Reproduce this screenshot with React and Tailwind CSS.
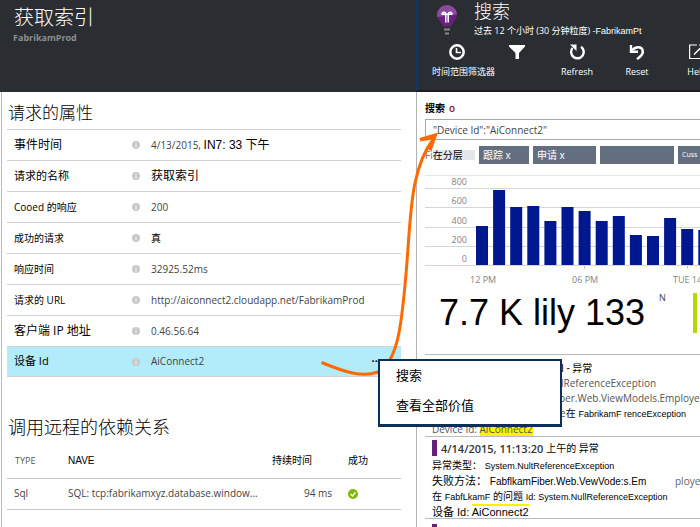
import React from "react";

const cjk = "font-['Open_Sans','Noto_Sans_CJK_SC',sans-serif]";
const arial = "font-['Liberation_Sans','Noto_Sans_CJK_SC',sans-serif]";

const properties = [
  { label: "事件时间", size: "text-[12px]", value: <>4/13/2015, <span className="text-[12px] text-black font-['Liberation_Sans','Noto_Sans_CJK_SC',sans-serif]">IN7: 33 下午</span></> },
  { label: "请求的名称", size: "text-[11px]", value: <span className="text-[12px] text-black">获取索引</span> },
  { label: "Cooed 的响应", size: "text-[10px]", value: "200" },
  { label: "成功的请求", size: "text-[10px]", value: <span className="text-black">真</span> },
  { label: "响应时间", size: "text-[10px]", value: "32925.52ms" },
  { label: "请求的 URL", size: "text-[10px]", value: "http://aiconnect2.cloudapp.net/FabrikamProd" },
  { label: "客户端 IP 地址", size: "text-[12px]", value: "0.46.56.64" },
  { label: "设备 Id", size: "text-[11px]", value: "AiConnect2", active: true },
];

const bars = [39, 75, 58, 59, 44, 58, 54, 44, 49, 30, 29, 47, 36, 35];
const gridLines = [
  { label: "800", y: 13 },
  { label: "600", y: 32 },
  { label: "400", y: 52 },
  { label: "200", y: 71 },
  { label: "0", y: 90 },
];

function InfoIcon() {
  return (
    <svg viewBox="0 0 8 8" className="size-2 shrink-0" aria-hidden="true">
      <circle cx="4" cy="4" r="4" fill="#c8c8c8" />
      <path d="M4 1.6v1M4 3.5v3" stroke="#f4f4f4" strokeWidth="1.1" />
    </svg>
  );
}

function BulbIcon() {
  return (
    <svg viewBox="0 0 20 31" className="mt-[3px] h-[31px] w-5 shrink-0" aria-hidden="true">
      <path d="M10 0a10 10 0 0 1 10 9.500c0 4.500-3.500 6-6 12H6C3.500 15.500 0 14 0 9.500A10 10 0 0 1 10 0z" fill="#68217a" />
      <path d="M10 0a10 10 0 0 1 10 9.500L0 12V9.500A10 10 0 0 1 10 0z" fill="#8a4b9c" />
      <path d="M5 9.800c0-3.400 3.800-3.400 3.800 0V17.500M15 9.800c0-3.400-3.800-3.400-3.800 0V17.500M5 9.300h10" fill="none" stroke="#fff" strokeWidth="1.500" />
      <path d="M7 24.500h6M8 28.500h4" stroke="#8a8a8a" strokeWidth="2" />
    </svg>
  );
}

function ToolButton({ label, children }) {
  return (
    <button type="button" className="flex w-[60px] shrink-0 flex-col items-center gap-[5px] text-[9px] leading-[14px] text-white">
      {children}
      <span>{label}</span>
    </button>
  );
}

function LeftPane() {
  return (
    <section className="flex w-[416px] shrink-0 flex-col">
      <header className="h-[92px] bg-[#2a2e32] pl-[13px] pt-[5px]">
        <h1 className="pl-px text-[20px] font-light leading-[26px] text-white">获取索引</h1>
        <p className="text-[9px] font-bold leading-[14px] text-[#8b8e91]">FabrikamProd</p>
      </header>
      <div className="ml-px flex-1 border-l border-[#b9bbbd] pl-[5px] pr-[15px]">
        <h2 className="flex h-[37px] items-center pl-px pt-1 text-[17px] font-light text-black">请求的属性</h2>
        <dl>
          {properties.map((p) => (
            <div
              key={p.label}
              className={`flex h-[31px] items-center border-t border-[#d2d2d2] pl-[7px] ${p.active ? "border-b bg-[#b2ebfa]" : ""}`}
            >
              <dt className={`w-[118px] shrink-0 text-black ${p.size}`}>{p.label}</dt>
              <InfoIcon />
              <dd className="ml-[11px] flex-1 whitespace-nowrap text-[10px] text-[#444]">{p.value}</dd>
              {p.active && (
                <button type="button" aria-label="更多" className="mr-5 text-[11px] font-bold text-black">···</button>
              )}
            </div>
          ))}
        </dl>
        <h2 className="mt-[37px] flex h-[26px] items-center pl-px text-[18px] font-light text-black">调用远程的依赖关系</h2>
        <table className="mt-1 w-full table-fixed text-left text-[10px] text-[#444]">
          <thead>
            <tr className="h-[34px] border-b border-[#c8c8c8]">
              <th className="w-[61px] pl-2 text-[9px] font-normal text-[#555]">TYPE</th>
              <th className={`text-[10px] font-normal text-black ${arial}`}>NAVE</th>
              <th className="w-[84px] pl-2 text-[10px] font-normal text-black">持续时间</th>
              <th className="w-[53px] text-[10px] font-normal text-black">成功</th>
            </tr>
          </thead>
          <tbody>
            <tr className="h-[31px] border-b border-[#c8c8c8]">
              <td className="pl-[7px]">Sql</td>
              <td className="whitespace-nowrap">SQL: tcp:fabrikamxyz.database.window...</td>
              <td className="pr-4 text-right">94 ms</td>
              <td>
                <svg viewBox="0 0 10 10" className="size-[10px]" role="img" aria-label="成功">
                  <circle cx="5" cy="5" r="5" fill="#7fba00" />
                  <path d="M2.600 5.100l1.800 1.800 3-3.400" fill="none" stroke="#fff" strokeWidth="1.400" />
                </svg>
              </td>
            </tr>
          </tbody>
        </table>
      </div>
    </section>
  );
}

function SearchHeader() {
  return (
    <header className="h-[92px] overflow-hidden border-b-2 border-l border-b-[#1b1d1f] border-l-[#0a3a6b] bg-[#2a2e32] text-white">
      <div className="flex h-[42px] gap-[17px] pl-5 pt-[2px]">
        <BulbIcon />
        <div className="whitespace-nowrap">
          <h1 className="text-[18px] font-light leading-[18px]">搜索</h1>
          <p className="pt-1 text-[9px] leading-[14px]">
            过去 12 个小时 (30 分钟粒度) <span className={arial}>-FabrikamPt</span>
          </p>
        </div>
      </div>
      <nav className="flex pl-[10px] pt-[2px]">
        <button type="button" className="flex w-[60px] shrink-0 flex-col items-start gap-[5px] whitespace-nowrap pl-[5px] text-[9px] leading-[14px]">
          <svg viewBox="0 0 16 16" className="ml-[17px] size-4" aria-hidden="true">
            <circle cx="8" cy="8" r="6.700" fill="none" stroke="#fff" strokeWidth="2.500" />
            <path d="M7.500 4v4.500H12" fill="none" stroke="#fff" strokeWidth="1.600" />
          </svg>
          <span>时间范围筛选器</span>
        </button>
        <ToolButton label="">
          <svg viewBox="0 0 16 16" className="size-4" aria-label="筛选器" role="img">
            <path d="M0 1h16v1.500L10 9v6H6.500V9L0 2.500z" fill="#fff" />
          </svg>
        </ToolButton>
        <ToolButton label="Refresh">
          <svg viewBox="0 0 16 16" className="size-4" aria-hidden="true">
            <path d="M12 2.800A6.300 6.300 0 1 1 3.500 4" fill="none" stroke="#fff" strokeWidth="2.400" />
            <path d="M1 .5h6.500V7z" fill="#fff" />
          </svg>
        </ToolButton>
        <ToolButton label="Reset">
          <svg viewBox="0 0 16 16" className="size-4" aria-hidden="true">
            <path d="M3 6.200c2-2 4-3 6-3 3 0 4.800 2 4.800 4.700 0 3-3 5-5.800 7.300" fill="none" stroke="#fff" strokeWidth="2.500" />
            <path d="M2 1v6.700h7" fill="none" stroke="#fff" strokeWidth="2.400" />
          </svg>
        </ToolButton>
        <ToolButton label="Help">
          <svg viewBox="0 0 16 16" className="size-4" aria-hidden="true">
            <path d="M8 1H.6v13.500h14V8M10 1h4.500V6" fill="none" stroke="#fff" strokeWidth="1.200" />
            <path d="M5 10.500l9-9" fill="none" stroke="#fff" strokeWidth="1.500" />
          </svg>
        </ToolButton>
      </nav>
    </header>
  );
}

function Chart() {
  return (
    <svg width="300" height="116" viewBox="0 0 300 116" className="block" role="img" aria-label="事件数">
      <path d="M0 .5h300" stroke="#e6e6e6" />
      {gridLines.map((g) => (
        <g key={g.label}>
          <path d={`M0 ${g.y + 0.5}h300`} stroke="#d4d6d8" />
          <text x="42" y={g.y - 3} textAnchor="end" fontSize="9" fill="#808488">{g.label}</text>
        </g>
      ))}
      {bars.map((h, i) => (
        <rect key={i} x={51 + i * 17.1} y={90 - h} width="12" height={h} fill="#00188f" />
      ))}
      <path d="M159.500 91v3M262.500 91v3" stroke="#c4c6c8" />
      <g fontSize="9" fill="#808488">
        <text x="45" y="108">12 PM</text>
        <text x="147" y="108">06 PM</text>
        <text x="248" y="108">TUE 14</text>
      </g>
    </svg>
  );
}

const chip = "flex h-[18px] shrink-0 items-center bg-[#636f7f] px-1 text-[10px] text-white";

function RightPane() {
  return (
    <section className="flex min-w-0 flex-1 flex-col overflow-hidden">
      <SearchHeader />
      <div className="flex-1 overflow-hidden whitespace-nowrap border-l border-[#b0b3b6] pl-2">
        <label htmlFor="query" className="flex h-[27px] items-center gap-1 pt-[5px] text-[10px] font-semibold text-black">
          搜索 <span className="text-[#8b1a1a]">o</span>
        </label>
        <input
          id="query"
          defaultValue={'"Device Id":"AiConnect2"'}
          className="block h-[21px] w-[300px] border border-[#a6a9ac] bg-white px-[7px] text-[10px] text-[#444]"
        />
        <div className="mt-[6px] flex h-[18px] items-center">
          <div className="flex w-[54px] shrink-0 items-center text-[10px] text-[#777]">
            Fi<span className="bg-[#e3e7ea] pr-3 leading-[10px] text-black">在分层</span>
          </div>
          <div className="flex gap-1">
            <button type="button" className={`${chip} w-[50px]`}>跟踪 x</button>
            <button type="button" className={`${chip} w-[63px]`}>申请 x</button>
            <button type="button" aria-label="筛选" className={`${chip} w-[74px]`} />
            <button type="button" className={`${chip} w-[50px]`}><span className="text-[7px]">Cuss</span></button>
          </div>
        </div>
        <div className="mt-[11px]"><Chart /></div>
        <div className="flex h-[63px] items-start pl-[14px] pt-[2px]">
          <span className={`w-[220px] shrink-0 text-[36px] leading-[40px] text-black ${arial}`}>7.7 K lily 133</span>
          <span className="w-[34px] shrink-0 text-[9px] leading-[10px] text-[#444]">N</span>
          <span className="h-10 w-1 shrink-0 bg-[#b4d800]" />
        </div>
        <article className="h-[82px] border-t border-[#b8bbbe] pt-[6px] text-[10px] leading-[15px] text-[#555]">
          <h3 className="pl-[136px] font-semibold text-[#222]">l - <span className="font-normal text-black">异常</span></h3>
          <p className="pl-[136px]">lReferenceException</p>
          <p className="pl-[134px]">ber.Web.ViewModels.Employe</p>
          <p className="pl-[135px]">e<span className={`text-black ${arial}`}>在 <span className="text-[9px]">FabrikamF renceException</span></span></p>
          <p className="pl-[7px]">Device Id: <mark className="bg-[#fff200] text-[#555]">AiConnect2</mark></p>
        </article>
        <article className="h-[82px] border-t border-[#b8bbbe] pl-[7px] pt-[3px] text-[10px] leading-[15px] text-black">
          <h3 className="mb-[2px] flex items-center">
            <span className="mr-1 h-4 w-[5px] bg-[#68217a]" />
            <span className="mr-[3px] text-[11px] font-semibold text-[#333]">4/14/2015, 11:13:20</span>
            <span className="font-normal">上午的 异常</span>
          </h3>
          <p className={arial}>异常类型： <span className="text-[9px]">System.NultReferenceException</span></p>
          <p className={`flex ${arial}`}>
            <span className="w-[243px] shrink-0"><span className="text-[11px]">失败方法：</span> FabflkamFiber.Web.VewVode:s.Em</span>
            <span className={`text-[#666] ${cjk}`}>ploye</span>
          </p>
          <p className={arial}>在 <span className="text-[9px]">FabfLkamF</span> 的问题 <span className="text-[9px]">Id: System.NullReferenceException</span></p>
          <p className={`text-[11px] ${arial}`}>设备 Id: <span className="border-t-2 border-[#fff200]">AiConnect2</span></p>
        </article>
        <article className="border-t border-[#b8bbbe] pl-[7px] pt-[5px]">
          <span className="block h-4 w-[5px] bg-[#68217a]" />
        </article>
      </div>
    </section>
  );
}

export default function App() {
  return (
    <main className={`relative flex h-screen overflow-hidden bg-white ${cjk}`}>
      <LeftPane />
      <RightPane />
      <svg width="130" height="260" viewBox="320 125 130 260" className="pointer-events-none absolute left-[320px] top-[125px]" aria-hidden="true">
        <path d="M321.500 362.500C345 372 362 378 378 372C398 362 402 325 407 262C411 210 411 168 434 138" fill="none" stroke="#ff6a00" strokeWidth="3" />
        <path d="M419.500 138L438 132.500L431.500 151L428.500 150L431.500 139.500L420.500 141.500z" fill="#ff6a00" />
      </svg>
      <div role="menu" className="absolute left-[378px] top-[359px] flex h-[68px] w-[184px] flex-col border-2 border-b-[3px] border-[#0b2f57] bg-white pl-4 text-[13px] text-black">
        <button type="button" role="menuitem" className="h-[30px] text-left">搜索</button>
        <button type="button" role="menuitem" className="h-[30px] text-left">查看全部价值</button>
      </div>
    </main>
  );
}
